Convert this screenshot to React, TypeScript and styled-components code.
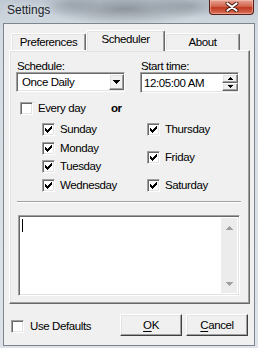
import React from "react";
import styled, { createGlobalStyle, css } from "styled-components";

const GlobalStyle = createGlobalStyle`
  html, body {
    margin: 0;
    padding: 0;
  }
  body {
    width: 258px;
    height: 348px;
    overflow: hidden;
    font-family: "Liberation Sans", Arial, sans-serif;
    font-size: 11.5px;
    letter-spacing: -0.4px;
    color: #000;
  }
`;

// classic 3D edges
const sunken = css`
  box-sizing: border-box;
  border: 1px solid;
  border-color: #a0a0a0 #ffffff #ffffff #a0a0a0;
  box-shadow: inset 1px 1px #696969, inset -1px -1px #e3e3e3;
`;

const raised = css`
  box-sizing: border-box;
  border: 1px solid;
  border-color: #ffffff #696969 #696969 #ffffff;
  box-shadow: inset -1px -1px #a0a0a0, inset 1px 1px #e3e3e3;
  background: #f0f0f0;
`;

const Window = styled.div`
  width: 258px;
  height: 348px;
  box-sizing: border-box;
  display: flex;
  flex-direction: column;
  background:
    radial-gradient(ellipse 80px 16px at 125px 9px, rgba(86, 92, 100, 0.5), transparent),
    radial-gradient(ellipse 40px 12px at 190px 6px, rgba(110, 116, 124, 0.4), transparent),
    radial-gradient(ellipse 30px 12px at 70px 4px, rgba(120, 126, 134, 0.35), transparent),
    linear-gradient(#bfc8d2, #d4dbe2 30px, #dde3e9);
`;

const TitleBar = styled.div`
  height: 23px;
  display: flex;
  align-items: flex-start;
  justify-content: space-between;
  padding: 0 4px 0 7px;
`;

const Title = styled.span`
  margin-top: 3px;
  font-size: 12px;
  letter-spacing: 0;
  line-height: 14px;
  color: #1c1e2a;
  text-shadow: 0 0 6px rgba(255, 255, 255, 0.7);
`;

const CloseButton = styled.div`
  width: 45px;
  height: 15px;
  box-sizing: border-box;
  display: flex;
  align-items: center;
  justify-content: center;
  border: 1px solid #5a1d15;
  border-top: none;
  border-radius: 0 0 4px 4px;
  background: linear-gradient(#e6a392, #d2664e 45%, #c03a22 55%, #d9735a);
  box-shadow: inset 0 0 0 1px rgba(255, 210, 200, 0.45);
`;

const Client = styled.div`
  flex: 1;
  margin: 0 3px 2px 3px;
  border: 1px solid #7d858f;
  background: #f0f0f0;
  display: flex;
  flex-direction: column;
`;

const TabStrip = styled.div`
  display: flex;
  align-items: flex-end;
  height: 20px;
  margin-top: 6px;
  padding-left: 7px;
  position: relative;
  z-index: 1;
`;

const Tab = styled.div<{ $active?: boolean; $w: number }>`
  width: ${(p) => p.$w}px;
  box-sizing: border-box;
  display: flex;
  justify-content: center;
  background: #f0f0f0;
  border-top: 1px solid #ffffff;
  border-left: 1px solid #ffffff;
  border-right: 1px solid #696969;
  border-radius: 2px 2px 0 0;
  box-shadow: inset -1px 0 #a0a0a0, inset 1px 1px #e3e3e3;
  height: ${(p) => (p.$active ? 21 : 17)}px;
  margin-bottom: ${(p) => (p.$active ? -1 : 0)}px;
  padding-top: 2px;
  line-height: 13px;
`;

const Panel = styled.div`
  margin-left: 5px;
  width: 241px;
  height: 254px;
  ${raised};
  padding: 10px 0 0 6px;
  display: flex;
  flex-direction: column;
`;

const FieldRow = styled.div`
  display: flex;
  gap: 15px;
`;

const Field = styled.div<{ $w: number }>`
  width: ${(p) => p.$w}px;
  display: flex;
  flex-direction: column;
`;

const Label = styled.div`
  line-height: 11px;
  height: 11px;
  padding-left: 1px;
`;

const Combo = styled.div`
  ${sunken};
  height: 20px;
  background: #fff;
  display: flex;
  align-items: center;
  padding: 2px 0 2px 5px;
`;

const TimeBox = styled(Combo)`
  height: 21px;
  padding-left: 3px;
`;

const ValueText = styled.span`
  flex: 1;
  line-height: 14px;
`;

const DropButton = styled.div`
  ${raised};
  width: 15px;
  height: 16px;
  display: flex;
  align-items: center;
  justify-content: center;
`;

const Spinner = styled.div`
  width: 16px;
  height: 17px;
  display: flex;
  flex-direction: column;
`;

const SpinHalf = styled.div`
  ${raised};
  flex: 1;
  display: flex;
  align-items: center;
  justify-content: center;
`;

const CheckItem = styled.div<{ $w?: number }>`
  display: flex;
  align-items: center;
  gap: 5px;
  height: 13px;
  line-height: 13px;
  width: ${(p) => (p.$w ? `${p.$w}px` : "auto")};
`;

const Box = styled.div`
  ${sunken};
  width: 13px;
  height: 13px;
  background: #fff;
  flex: none;
  display: flex;
  align-items: center;
  justify-content: center;
`;

const EveryRow = styled.div`
  display: flex;
  align-items: center;
  margin-top: 9px;
  padding-left: 4px;
`;

const Or = styled.span`
  font-weight: bold;
  line-height: 13px;
`;

const DayGrid = styled.div`
  display: flex;
  margin-top: 8px;
  padding-left: 26px;
  height: 69px;
`;

const DayColumn = styled.div<{ $w?: number }>`
  display: flex;
  flex-direction: column;
  justify-content: space-between;
  width: ${(p) => (p.$w ? `${p.$w}px` : "auto")};
`;

const Separator = styled.div`
  margin: 9px 0 0 1px;
  width: 224px;
  height: 2px;
  box-sizing: border-box;
  border-top: 1px solid #a0a0a0;
  border-bottom: 1px solid #ffffff;
`;

const Memo = styled.div`
  ${sunken};
  margin: 12px 0 0 2px;
  width: 222px;
  height: 81px;
  background: #fff;
  display: flex;
  padding: 2px;
`;

const MemoText = styled.div`
  flex: 1;
  padding: 1px 0 0 1px;
`;

const Caret = styled.div`
  width: 1px;
  height: 13px;
  background: #000;
`;

const ScrollBar = styled.div`
  width: 16px;
  background: #ececec;
  display: flex;
  flex-direction: column;
  justify-content: space-between;
  align-items: center;
  padding: 8px 0 7px;
  box-sizing: border-box;
`;

const Footer = styled.div`
  display: flex;
  align-items: center;
  margin-top: 10px;
  padding: 0 6px 0 7px;
  height: 22px;
`;

const FooterCheck = styled(CheckItem)`
  margin-top: 3px;
  gap: 6px;
`;

const Buttons = styled.div`
  margin-left: auto;
  display: flex;
  gap: 4px;
`;

const PushButton = styled.div`
  ${raised};
  border-color: #ffffff #404040 #404040 #ffffff;
  width: 62px;
  height: 22px;
  display: flex;
  align-items: center;
  justify-content: center;
  line-height: 14px;
  u {
    text-decoration: underline;
    text-underline-offset: 2px;
  }
`;

const CheckMark = () => (
  <svg width="7" height="7" viewBox="0 0 7 7" shapeRendering="crispEdges">
    <path
      fill="#000"
      d="M6 0h1v3h-1zM5 1h1v3h-1zM4 2h1v3h-1zM0 2h1v3h-1zM1 3h1v3h-1zM2 4h1v3h-1zM3 3h1v3h-1z"
    />
  </svg>
);

const Check: React.FC<{ checked?: boolean; label: string; w?: number }> = ({
  checked,
  label,
  w,
}) => (
  <CheckItem $w={w}>
    <Box>{checked && <CheckMark />}</Box>
    <span>{label}</span>
  </CheckItem>
);

const Arrow = ({ up, w = 7, color = "#000" }: { up?: boolean; w?: number; color?: string }) => {
  const h = Math.ceil(w / 2);
  return (
    <svg width={w} height={h} viewBox={`0 0 ${w} ${h}`} shapeRendering="crispEdges">
      <polygon
        fill={color}
        points={up ? `0,${h} ${w},${h} ${w / 2},0` : `0,0 ${w},0 ${w / 2},${h}`}
      />
    </svg>
  );
};

export default function App() {
  return (
    <>
      <GlobalStyle />
      <Window>
        <TitleBar>
          <Title>Settings</Title>
          <CloseButton>
            <svg width="14" height="10" viewBox="0 0 14 10">
              <path
                d="M2.5 1.5 L11.5 8.5 M11.5 1.5 L2.5 8.5"
                stroke="#4a1a14"
                strokeWidth="4"
                strokeLinecap="round"
              />
              <path
                d="M2.5 1.5 L11.5 8.5 M11.5 1.5 L2.5 8.5"
                stroke="#ffffff"
                strokeWidth="2.2"
                strokeLinecap="round"
              />
            </svg>
          </CloseButton>
        </TitleBar>

        <Client>
          <TabStrip>
            <Tab $w={75}>Preferences</Tab>
            <Tab $w={79} $active>
              Scheduler
            </Tab>
            <Tab $w={75}>About</Tab>
          </TabStrip>

          <Panel>
            <FieldRow>
              <Field $w={109}>
                <Label>Schedule:</Label>
                <Combo>
                  <ValueText>Once Daily</ValueText>
                  <DropButton>
                    <Arrow w={7} />
                  </DropButton>
                </Combo>
              </Field>
              <Field $w={99}>
                <Label>Start time:</Label>
                <TimeBox>
                  <ValueText>12:05:00 AM</ValueText>
                  <Spinner>
                    <SpinHalf>
                      <Arrow up w={5} />
                    </SpinHalf>
                    <SpinHalf>
                      <Arrow w={5} />
                    </SpinHalf>
                  </Spinner>
                </TimeBox>
              </Field>
            </FieldRow>

            <EveryRow>
              <Check label="Every day" w={91} />
              <Or>or</Or>
            </EveryRow>

            <DayGrid>
              <DayColumn $w={105}>
                <Check checked label="Sunday" />
                <Check checked label="Monday" />
                <Check checked label="Tuesday" />
                <Check checked label="Wednesday" />
              </DayColumn>
              <DayColumn>
                <Check checked label="Thursday" />
                <Check checked label="Friday" />
                <Check checked label="Saturday" />
              </DayColumn>
            </DayGrid>

            <Separator />

            <Memo>
              <MemoText>
                <Caret />
              </MemoText>
              <ScrollBar>
                <Arrow up w={7} color="#a0a0a0" />
                <Arrow w={7} color="#a0a0a0" />
              </ScrollBar>
            </Memo>
          </Panel>

          <Footer>
            <FooterCheck>
              <Box />
              <span>Use Defaults</span>
            </FooterCheck>
            <Buttons>
              <PushButton>
                <span>
                  <u>O</u>K
                </span>
              </PushButton>
              <PushButton>
                <span>
                  <u>C</u>ancel
                </span>
              </PushButton>
            </Buttons>
          </Footer>
        </Client>
      </Window>
    </>
  );
}
